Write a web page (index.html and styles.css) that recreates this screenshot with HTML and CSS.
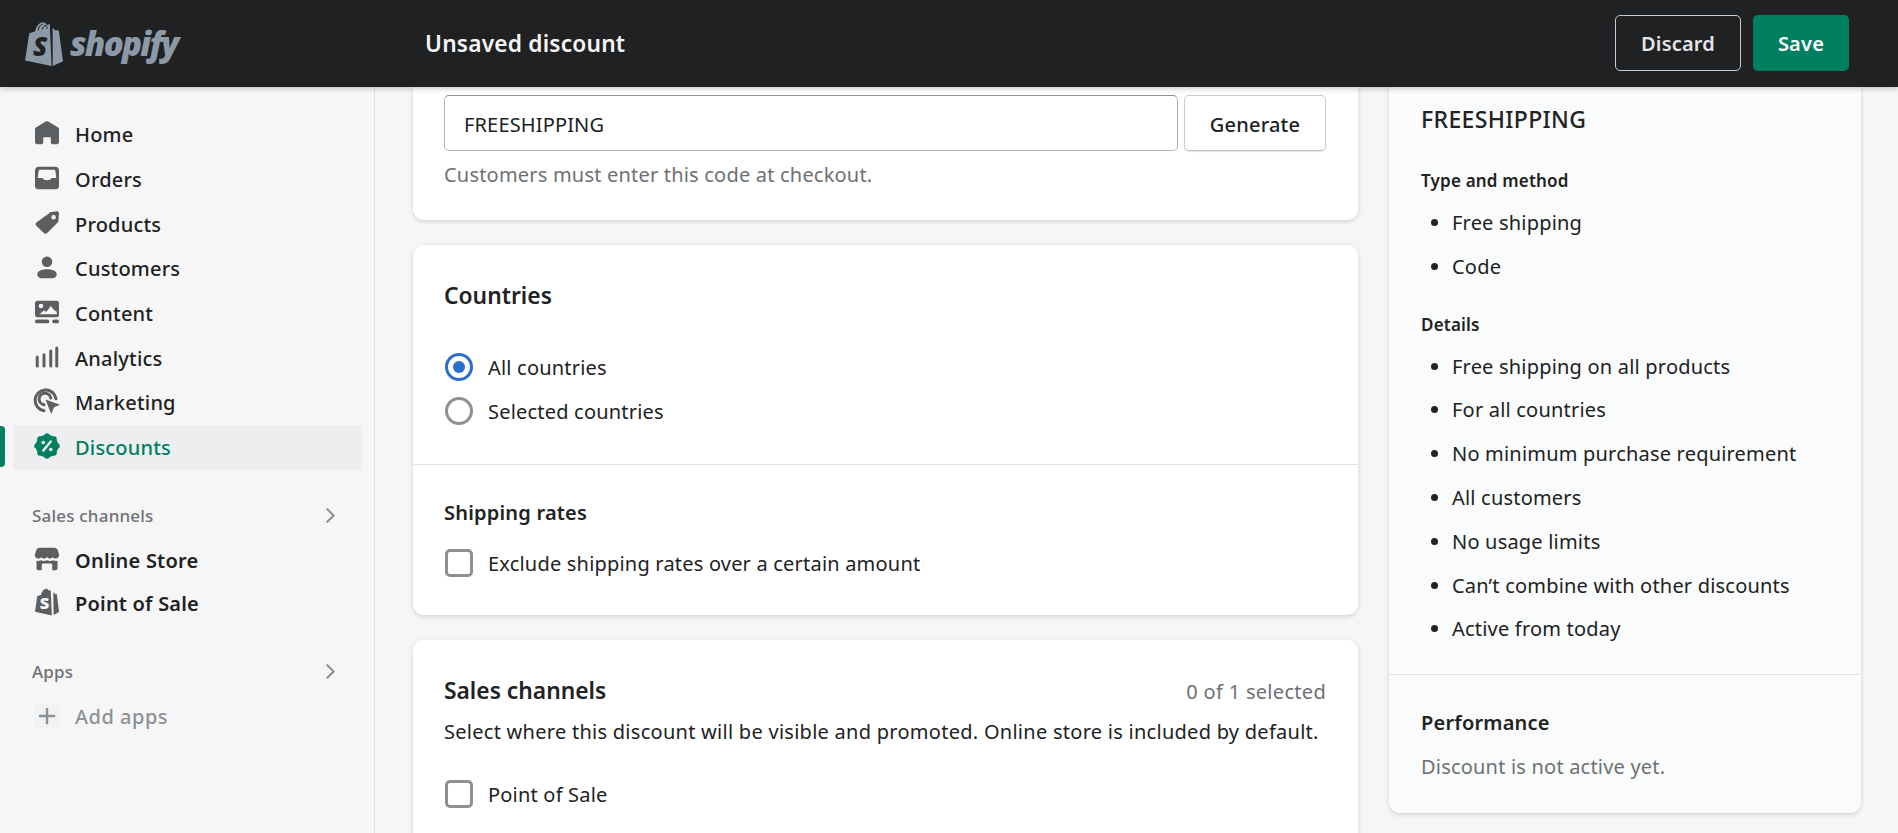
FILE: index.html
```html
<!DOCTYPE html>
<html lang="en">
<head>
  <meta charset="UTF-8">
  <meta name="viewport" content="width=device-width, initial-scale=1.0">
  <title>Unsaved discount - Shopify</title>
  <link rel="stylesheet" href="styles.css">
</head>
<body>
  <header class="topbar">
    <div class="logo">
      <svg class="logo-bag" viewBox="0 0 38 44">
        <path d="M0 38.500 4.300 11.200 10 9.400C11 4.500 13.800 1 17 .4 19.300 0 20.800 1.300 21.600 2.900L24.800 2 26.600 44Z"/>
        <path d="M27.600 5.800 30 8.200 33.800 8.600 38 39.300 27.800 44Z"/>
        <path class="logo-cut" d="M13 8.600C13.800 4.800 16 2.200 18 2M17.300 7.400C18 5 19.500 3.400 21 3.400 22 5 22.300 6 22.300 6.800" />
        <text class="logo-s" x="8" y="34">S</text>
      </svg>
      <span class="logo-text">shopify</span>
    </div>
    <div class="topbar-title">Unsaved discount</div>
    <div class="topbar-actions">
      <button class="btn btn-discard">Discard</button>
      <button class="btn btn-save">Save</button>
    </div>
  </header>

  <div class="layout">
    <nav class="sidebar">
      <ul class="nav-list">
        <li class="nav-item">
          <svg class="nav-icon" viewBox="0 0 20 20"><path d="M18 7.500V16c0 .8-.7 1.500-1.500 1.500h-2.800c-.8 0-1.200-.7-1.200-1.500v-3.200H7.500V16c0 .8-.4 1.500-1.200 1.500H3.500C2.700 17.500 2 16.800 2 16V7.500c0-.5.200-.9.600-1.200l6.500-3.900c.5-.3 1.300-.3 1.800 0l6.500 3.900c.4.300.6.700.6 1.200z"/></svg>
          Home
        </li>
        <li class="nav-item">
          <svg class="nav-icon" viewBox="0 0 20 20"><path fill-rule="evenodd" d="M4.500 2.500h11c1.400 0 2.500 1.100 2.500 2.500v10.500c0 1.100-.9 2-2 2H4c-1.100 0-2-.9-2-2V5c0-1.400 1.100-2.500 2.500-2.500zM5.500 4.500c-.6 0-1 .3-1.100.8L3.800 10H7c.4 1 1.600 1.500 3 1.500s2.600-.5 3-1.500h3.200l-.6-4.700c-.1-.5-.5-.8-1.100-.8h-9z"/></svg>
          Orders
        </li>
        <li class="nav-item">
          <svg class="nav-icon" viewBox="0 0 20 20"><path fill-rule="evenodd" d="M11.200 3.300c.3-.2.600-.4 1-.4l4.300-.7c.9-.1 1.600.6 1.500 1.500l-.4 5c0 .4-.2.700-.5 1l-7 7c-.6.600-1.600.6-2.200 0l-5-4.800c-.6-.6-.6-1.600 0-2.200l8.800-6.400zM14.400 7.700a1.500 1.500 0 1 0 0-3 1.500 1.500 0 0 0 0 3z"/></svg>
          Products
        </li>
        <li class="nav-item">
          <svg class="nav-icon" viewBox="0 0 20 20"><circle cx="10" cy="6.500" r="3.500"/><path d="M10 11.500c-4 0-6.500 1.500-6.500 3.300 0 1.600 1.500 2.700 3.500 2.700h6c2 0 3.500-1.100 3.500-2.700 0-1.800-2.500-3.300-6.500-3.300z"/></svg>
          Customers
        </li>
        <li class="nav-item">
          <svg class="nav-icon" viewBox="0 0 20 20"><path fill-rule="evenodd" d="M3.500 2.500h13c.8 0 1.500.7 1.500 1.500v8c0 .8-.7 1.500-1.500 1.500h-13c-.8 0-1.500-.7-1.500-1.500V4c0-.8.700-1.500 1.500-1.500zM6 7.500a1.500 1.500 0 1 0 0-3 1.500 1.500 0 0 0 0 3zM5 11.500h11.500V9.800L14.500 8.500l-2-2.500-2.800 3.800-1.700-.8z"/><rect x="2" y="15" width="9.500" height="2.500" rx="1.250"/><rect x="13.500" y="15" width="4.500" height="2.500" rx="1.250"/></svg>
          Content
        </li>
        <li class="nav-item">
          <svg class="nav-icon" viewBox="0 0 20 20"><rect x="2.500" y="9" width="2" height="8" rx="1"/><rect x="7" y="7.500" width="2" height="9.500" rx="1"/><rect x="11.500" y="5" width="2" height="12" rx="1"/><rect x="15.500" y="3" width="2" height="14" rx="1"/></svg>
          Analytics
        </li>
        <li class="nav-item">
          <svg class="nav-icon" viewBox="0 0 20 20"><path class="icon-stroke" d="M8 16.500A7 7 0 1 1 16 8.500"/><path class="icon-stroke" d="M8 12.500a3.900 3.900 0 1 1 4.500-4.500"/><path d="M9 9l9.700 3.500-4 1.700-1.900 4.400z"/></svg>
          Marketing
        </li>
        <li class="nav-item nav-item-active">
          <svg class="nav-icon" viewBox="0 0 20 20"><circle cx="10" cy="10" r="7.500"/><circle cx="10" cy="3.300" r="1.800"/><circle cx="14.700" cy="5.300" r="1.800"/><circle cx="16.700" cy="10" r="1.800"/><circle cx="14.700" cy="14.700" r="1.800"/><circle cx="10" cy="16.700" r="1.800"/><circle cx="5.300" cy="14.700" r="1.800"/><circle cx="3.300" cy="10" r="1.800"/><circle cx="5.300" cy="5.300" r="1.800"/><path class="icon-cut" d="M12.500 7l-5 6"/><circle class="icon-dot" cx="7.500" cy="7.700" r="1.200"/><circle class="icon-dot" cx="12.500" cy="12.300" r="1.200"/></svg>
          Discounts
        </li>
      </ul>

      <div class="nav-heading nav-heading-sales">
        Sales channels
        <svg class="chevron" viewBox="0 0 20 20"><path d="M7 4l6 6-6 6"/></svg>
      </div>
      <ul class="nav-list nav-list-tight">
        <li class="nav-item">
          <svg class="nav-icon" viewBox="0 0 20 20"><path d="M5 2.500h10c1 0 1.900.7 2.200 1.600L18 6.800c.4 1.500-.7 2.900-2.200 2.900-.9 0-1.600-.4-2-1.100-.4.700-1.200 1.100-2 1.100s-1.400-.4-1.800-1c-.4.600-1 1-1.800 1s-1.600-.4-2-1.100c-.4.700-1.100 1.100-2 1.100C2.700 9.700 1.600 8.300 2 6.800l.8-2.700C3.100 3.200 4 2.500 5 2.500z"/><path d="M3 11.200c1 .2 2 .1 2.900-.4 1.200.6 2.800.6 4.100 0 1.300.6 2.900.6 4.100 0 .9.500 1.900.6 2.900.4v5c0 .8-.7 1.300-1.500 1.300h-2V14c0-.6-.4-1-1-1H7.500c-.6 0-1 .4-1 1v3.500h-2c-.8 0-1.500-.5-1.500-1.300z"/></svg>
          Online Store
        </li>
        <li class="nav-item">
          <svg class="nav-icon" viewBox="0 0 20 20"><path d="M2 16.500 3.500 6l2.500-.7C6.400 3.200 7.800 1.400 9.300 1.200c1-.1 1.700.5 2 1.300l1.200-.3.700 16.800z"/><path d="M14.200 3.500l1.200 1.200 1.200.1L18 16.600l-3.600 2z"/><text class="pos-s" x="5.200" y="14.500">S</text></svg>
          Point of Sale
        </li>
      </ul>

      <div class="nav-heading nav-heading-apps">
        Apps
        <svg class="chevron" viewBox="0 0 20 20"><path d="M7 4l6 6-6 6"/></svg>
      </div>
      <ul class="nav-list">
        <li class="nav-item nav-item-muted">
          <span class="add-icon">
            <svg viewBox="0 0 20 20"><path d="M10 3.500v13M3.500 10h13"/></svg>
          </span>
          Add apps
        </li>
      </ul>
    </nav>

    <main class="content">
      <div class="column">
        <section class="card card-code">
          <div class="code-row">
            <input class="code-input" type="text" value="FREESHIPPING">
            <button class="btn btn-generate">Generate</button>
          </div>
          <p class="help">Customers must enter this code at checkout.</p>
        </section>

        <section class="card">
          <div class="card-section countries">
            <h2 class="card-title">Countries</h2>
            <div class="options">
              <div class="option"><span class="radio radio-on"></span>All countries</div>
              <div class="option"><span class="radio"></span>Selected countries</div>
            </div>
          </div>
          <div class="card-section rates">
            <h3 class="sub-title">Shipping rates</h3>
            <div class="option"><span class="checkbox"></span>Exclude shipping rates over a certain amount</div>
          </div>
        </section>

        <section class="card">
          <div class="card-section channels">
            <div class="title-row">
              <h2 class="card-title">Sales channels</h2>
              <span class="selected-count">0 of 1 selected</span>
            </div>
            <p class="channels-desc">Select where this discount will be visible and promoted. Online store is included by default.</p>
            <div class="option"><span class="checkbox"></span>Point of Sale</div>
          </div>
        </section>
      </div>

      <aside class="summary">
        <div class="summary-top">
          <h2 class="summary-code">FREESHIPPING</h2>
          <h4 class="summary-label">Type and method</h4>
          <ul class="summary-list">
            <li>Free shipping</li>
            <li>Code</li>
          </ul>
          <h4 class="summary-label summary-label-details">Details</h4>
          <ul class="summary-list">
            <li>Free shipping on all products</li>
            <li>For all countries</li>
            <li>No minimum purchase requirement</li>
            <li>All customers</li>
            <li>No usage limits</li>
            <li>Can’t combine with other discounts</li>
            <li>Active from today</li>
          </ul>
        </div>
        <div class="summary-bottom">
          <h3 class="sub-title">Performance</h3>
          <p class="summary-note">Discount is not active yet.</p>
        </div>
      </aside>
    </main>
  </div>
</body>
</html>
```

FILE: styles.css
```css
* {
  margin: 0;
  padding: 0;
  box-sizing: border-box;
}

html, body {
  height: 100%;
  overflow: hidden;
}

body {
  font-family: "Noto Sans", "Open Sans", sans-serif;
  font-size: 20px;
  letter-spacing: 0.2px;
  color: #202223;
  background: #f6f6f7;
  display: flex;
  flex-direction: column;
}

ul {
  list-style: none;
}

h2, h3, h4 {
  font-weight: 600;
}

/* top bar */
.topbar {
  height: 87px;
  flex-shrink: 0;
  display: flex;
  align-items: center;
  background: #202123;
  box-shadow: 0 2px 5px rgba(0, 0, 0, 0.2);
  position: relative;
  z-index: 2;
}

.logo {
  width: 425px;
  padding-left: 25px;
  display: flex;
  align-items: center;
  gap: 7px;
}

.logo-bag {
  width: 38px;
  height: 44px;
  fill: #8c9aa8;
}

.logo-cut {
  fill: none;
  stroke: #202123;
  stroke-width: 1;
}

.logo-s {
  font-family: "Open Sans", sans-serif;
  font-size: 26px;
  font-weight: 800;
  font-style: italic;
  fill: #202123;
}

.logo-text {
  font-family: "Open Sans", sans-serif;
  font-size: 33px;
  font-weight: 800;
  font-style: italic;
  letter-spacing: -1.7px;
  color: #8c9aa8;
  line-height: 44px;
}

.topbar-title {
  flex: 1;
  font-size: 22.700px;
  font-weight: 600;
  color: #f6f6f7;
}

.topbar-actions {
  display: flex;
  gap: 12px;
  padding-right: 49px;
  padding-bottom: 1px;
}

.btn {
  height: 56px;
  font-family: inherit;
  font-size: 20px;
  font-weight: 600;
  letter-spacing: 0.2px;
  border-radius: 5px;
  cursor: pointer;
}

.btn-discard {
  width: 126px;
  background: transparent;
  color: #e3e5e7;
  border: 1px solid #c4cdd5;
}

.btn-save {
  width: 96px;
  background: #008060;
  color: #fff;
  border: none;
}

/* sidebar */
.layout {
  flex: 1;
  display: flex;
  min-height: 0;
}

.sidebar {
  width: 375px;
  flex-shrink: 0;
  border-right: 1px solid #e1e3e5;
  padding: 25.500px 12px 0 13px;
}

.nav-item {
  height: 44.700px;
  display: flex;
  align-items: center;
  gap: 13px;
  padding-left: 19px;
  font-weight: 500;
  position: relative;
}

.nav-icon {
  width: 30px;
  height: 30px;
  margin-top: -3px;
  fill: #5c5f62;
  flex-shrink: 0;
}

.icon-stroke {
  fill: none;
  stroke: #5c5f62;
  stroke-width: 2;
  stroke-linecap: round;
}

.nav-item-active {
  background: #edeeef;
  color: #008060;
}

.nav-item-active .nav-icon {
  fill: #008060;
}

.nav-item-active::before {
  content: "";
  position: absolute;
  left: -13px;
  top: 1px;
  width: 5px;
  height: 41px;
  background: #008060;
  border-radius: 0 4px 4px 0;
}

.icon-cut {
  fill: none;
  stroke: #edeeef;
  stroke-width: 1.600;
  stroke-linecap: round;
}

.icon-dot {
  fill: #edeeef;
}

.pos-s {
  font-family: "Open Sans", sans-serif;
  font-size: 11px;
  font-weight: 800;
  fill: #f6f6f7;
}

.nav-heading {
  display: flex;
  align-items: center;
  justify-content: space-between;
  height: 24px;
  padding: 0 21px 0 19px;
  font-size: 17px;
  font-weight: 500;
  color: #6d7175;
}

.nav-heading-sales {
  margin-top: 33.500px;
  margin-bottom: 11px;
}

.nav-heading-apps {
  margin-top: 34px;
  margin-bottom: 11px;
}

.nav-list-tight .nav-item {
  height: 43.500px;
  font-weight: 600;
}

.chevron {
  width: 21px;
  height: 21px;
  margin-top: -1px;
  fill: none;
  stroke: #8c9196;
  stroke-width: 2;
  stroke-linecap: round;
  stroke-linejoin: round;
}

.nav-item-muted {
  gap: 0;
  color: #8c9196;
  letter-spacing: 0.5px;
}

.add-icon {
  width: 26px;
  height: 26px;
  margin: -2px 15px 0 2px;
  background: #f1f2f3;
  border-radius: 3px;
  display: flex;
  align-items: center;
  justify-content: center;
}

.add-icon svg {
  width: 22px;
  height: 22px;
  fill: none;
  stroke: #8c9196;
  stroke-width: 2.200;
  stroke-linecap: round;
}

/* main column */
.content {
  flex: 1;
  display: grid;
  grid-template-columns: 945px 472px;
  column-gap: 31px;
  align-items: start;
  padding-left: 38px;
  overflow: hidden;
}

.column {
  display: flex;
  flex-direction: column;
  gap: 25px;
}

.card {
  background: #fff;
  border-radius: 11px;
  box-shadow: 0 0 7px rgba(23, 24, 24, 0.05), 0 2px 4px rgba(0, 0, 0, 0.1);
}

.card-code {
  padding: 8px 32px 32px 31px;
  border-radius: 0 0 11px 11px;
}

.code-row {
  display: flex;
  gap: 6px;
}

.code-input {
  flex: 1;
  height: 56px;
  padding: 2px 19px 0 19px;
  font-family: inherit;
  font-size: 20px;
  letter-spacing: 0.15px;
  color: #202223;
  background: #fff;
  border: 1px solid #aeb4b9;
  border-top-color: #898f94;
  border-radius: 5px;
  outline: none;
}

.btn-generate {
  width: 142px;
  padding-top: 2px;
  background: #fff;
  color: #202223;
  border: 1px solid #c9cccf;
  border-bottom-color: #babfc3;
  box-shadow: 0 1px 1px rgba(0, 0, 0, 0.1);
  font-weight: 500;
}

.help {
  margin-top: 11px;
  line-height: 26px;
  color: #6d7175;
}

.card-section {
  padding-left: 31px;
  padding-right: 32px;
}

.countries {
  padding-top: 36px;
  padding-bottom: 31px;
  border-bottom: 1px solid #e1e3e5;
}

.card-title {
  font-size: 22.800px;
  letter-spacing: 0;
  line-height: 30px;
}

.options {
  margin-top: 34px;
}

.option {
  height: 44px;
  display: flex;
  align-items: center;
  gap: 15px;
}

.radio, .checkbox {
  width: 28px;
  height: 28px;
  flex-shrink: 0;
  border: 3px solid #8c9196;
  background: #fff;
  margin-left: 1px;
}

.radio {
  border-radius: 50%;
  display: flex;
  align-items: center;
  justify-content: center;
}

.radio-on {
  border-color: #2c6ecb;
}

.radio-on::after {
  content: "";
  width: 12px;
  height: 12px;
  border-radius: 50%;
  background: #2c6ecb;
}

.checkbox {
  border-radius: 5px;
}

.rates {
  padding-top: 34px;
  padding-bottom: 30px;
}

.sub-title {
  font-size: 20px;
  line-height: 28px;
}

.rates .option {
  margin-top: 14px;
}

.channels {
  padding-top: 36px;
  padding-bottom: 40px;
}

.title-row {
  display: flex;
  justify-content: space-between;
  align-items: center;
}

.selected-count {
  color: #6d7175;
  letter-spacing: 0.3px;
}

.channels-desc {
  margin-top: 12px;
  line-height: 28px;
  letter-spacing: 0.27px;
}

.channels .option {
  margin-top: 26px;
}

/* summary card on the right */
.summary {
  background: #fafbfb;
  border-radius: 0 0 11px 11px;
  box-shadow: 0 0 7px rgba(23, 24, 24, 0.05), 0 2px 4px rgba(0, 0, 0, 0.1);
}

.summary-top {
  padding: 17px 32px 23px;
  border-bottom: 1px solid #e1e3e5;
}

.summary-code {
  font-size: 23px;
  font-weight: 500;
  letter-spacing: 0.35px;
  line-height: 30px;
}

.summary-label {
  margin-top: 35px;
  font-size: 17px;
  line-height: 24px;
}

.summary-label-details {
  margin-top: 24px;
}

.summary-list {
  list-style: disc;
  margin-top: 8px;
  padding-left: 31px;
}

.summary-list li {
  height: 43.800px;
  line-height: 43.800px;
}

.summary-bottom {
  padding: 34px 32px 32px;
}

.summary-note {
  margin-top: 16px;
  line-height: 28px;
  color: #6d7175;
}
```
